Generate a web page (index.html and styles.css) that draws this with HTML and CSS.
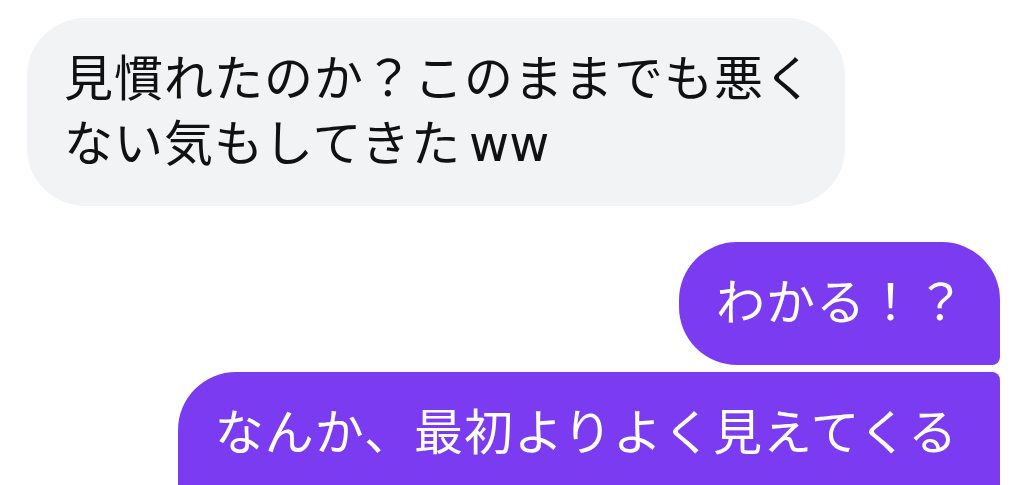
FILE: index.html
```html
<!DOCTYPE html>
<html lang="ja">
<head>
    <meta charset="UTF-8">
    <meta name="viewport" content="width=device-width, initial-scale=1.0">
    <title>Chat</title>
    <link rel="stylesheet" href="styles.css">
</head>
<body>
    <div class="chat-container">
        <div class="message received">
            <div class="bubble">見慣れたのか？このままでも悪くない気もしてきた<span class="latin">ww</span></div>
        </div>

        <div class="message-group sent">
            <div class="bubble first">わかる！？</div>
            <div class="bubble last">なんか、最初よりよく見えてくる</div>
        </div>
    </div>
</body>
</html>
```

FILE: styles.css
```css
body {
    font-family: "Noto Sans CJK JP", "Noto Sans", sans-serif;
    margin: 0;
    background-color: #ffffff;
    overflow: hidden;
}
.chat-container {
    display: flex;
    flex-direction: column;
    padding: 18px 24px 0 27px;
}
.message {
    display: flex;
}
.bubble {
    font-size: 49px;
    letter-spacing: 1px;
    line-height: 65px;
    padding: 24px 34px 34px 37px;
}
.received .bubble {
    max-width: 818px;
    box-sizing: border-box;
    padding-right: 28px;
    background-color: #f2f3f5;
    color: #111111;
    border-radius: 58px;
}
.latin {
    font-family: "DejaVu Sans", sans-serif;
    margin-left: 8px;
    letter-spacing: 0;
    line-height: 0;
}
.message-group {
    display: flex;
    flex-direction: column;
    align-items: flex-end;
    gap: 7px;
    margin-top: 36px;
}
.sent .bubble {
    background-color: #7b3bf0;
    color: #ffffff;
}
.sent .first {
    border-radius: 58px 58px 8px 58px;
}
.sent .last {
    border-radius: 58px 8px 8px 58px;
    padding-right: 42px;
    height: 200px;
}
```
